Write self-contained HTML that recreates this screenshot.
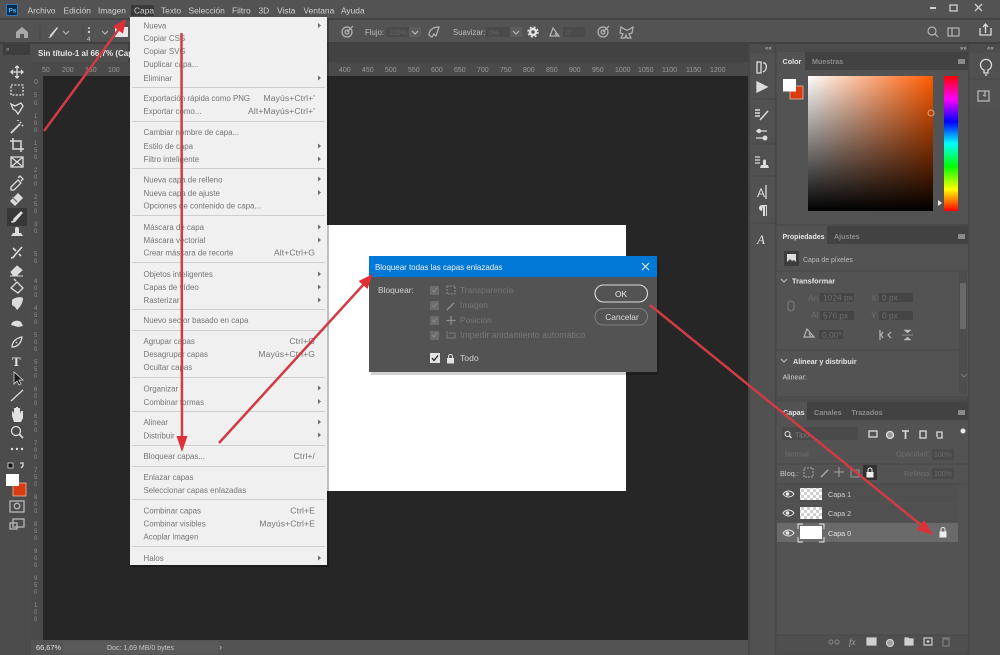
<!DOCTYPE html>
<html><head><meta charset="utf-8"><style>
html,body{margin:0;padding:0;background:#535353;width:1000px;height:655px;overflow:hidden}
svg{display:block}
text{font-family:"Liberation Sans",sans-serif;font-size:8.4px}
.mb text{fill:#d2d2d2;font-size:8.4px}
.m text{fill:#757575;font-size:7.9px}
.m text.r{text-anchor:end;font-size:8.6px;letter-spacing:.1px}
.w{fill:#e4e4e4}.g{fill:#8d8d8d}.d{fill:#6f6f6f}.b{font-weight:bold}
.ic{fill:none;stroke:#dcdcdc;stroke-width:1.3}
.ic2{fill:none;stroke:#b5b5b5;stroke-width:1.2}
.rl text{fill:#9a9a9a;font-size:7px}
.sp{stroke:#cfcfcf;stroke-width:1}
</style></head><body>
<svg width="1000" height="655" viewBox="0 0 1000 655" xmlns="http://www.w3.org/2000/svg">
<defs>
<linearGradient id="h1" x1="0" x2="1" y1="0" y2="0"><stop offset="0" stop-color="#fff"/><stop offset="1" stop-color="#ff5a00"/></linearGradient>
<linearGradient id="v1" x1="0" x2="0" y1="0" y2="1"><stop offset="0" stop-color="#000" stop-opacity="0"/><stop offset="1" stop-color="#000"/></linearGradient>
<linearGradient id="hue" x1="0" x2="0" y1="0" y2="1"><stop offset="0" stop-color="#f00"/><stop offset=".17" stop-color="#f0f"/><stop offset=".34" stop-color="#00f"/><stop offset=".5" stop-color="#0ff"/><stop offset=".67" stop-color="#0f0"/><stop offset=".84" stop-color="#ff0"/><stop offset="1" stop-color="#f00"/></linearGradient>
<pattern id="ck" width="6" height="6" patternUnits="userSpaceOnUse"><rect width="6" height="6" fill="#fff"/><rect width="3" height="3" fill="#cfcfcf"/><rect x="3" y="3" width="3" height="3" fill="#cfcfcf"/></pattern>
</defs>

<!-- base -->
<rect width="1000" height="655" fill="#535353"/>
<rect y="18" width="1000" height="2" fill="#434343"/>
<rect y="42" width="1000" height="2" fill="#404040"/>
<!-- tab bar -->
<rect x="31" y="44" width="717" height="18" fill="#424242"/>
<rect x="31" y="44" width="97" height="18" fill="#4e4e4e"/>
<text x="38" y="56" class="w b" style="font-size:8px">Sin título-1 al 66,7% (Capa</text>
<!-- left strip -->
<rect x="0" y="44" width="31" height="611" fill="#4c4c4c"/>
<rect x="3" y="44" width="27" height="11" fill="#3e3e3e"/>
<text x="6" y="51" style="font-size:6px" fill="#bbb">»</text>
<!-- rulers -->
<rect x="31" y="62" width="717" height="14" fill="#4a4a4a"/>
<rect x="31" y="62" width="12" height="578" fill="#4a4a4a"/>
<g class="rl">
<text x="42" y="72">50</text><text x="62" y="72">200</text><text x="85" y="72">150</text><text x="108" y="72">100</text>
<text x="339" y="72">400</text><text x="362" y="72">450</text><text x="385" y="72">500</text><text x="408" y="72">550</text><text x="431" y="72">600</text><text x="454" y="72">650</text><text x="477" y="72">700</text><text x="500" y="72">750</text><text x="523" y="72">800</text><text x="546" y="72">850</text><text x="569" y="72">900</text><text x="592" y="72">950</text><text x="615" y="72">1000</text><text x="638" y="72">1050</text><text x="662" y="72">1100</text><text x="686" y="72">1150</text><text x="710" y="72">1200</text>
</g>
<g fill="#8e8e8e" style="font-size:6.5px">
<text x="34" y="84" style="font-size:7px">0</text>
<text x="34" y="97" style="font-size:6px">5</text><text x="34" y="105" style="font-size:6px">0</text>
<text x="34" y="118" style="font-size:6px">1</text><text x="34" y="125" style="font-size:6px">0</text><text x="34" y="132" style="font-size:6px">0</text>
<text x="34" y="145" style="font-size:6px">1</text><text x="34" y="152" style="font-size:6px">5</text><text x="34" y="159" style="font-size:6px">0</text>
<text x="34" y="172" style="font-size:6px">2</text><text x="34" y="179" style="font-size:6px">0</text><text x="34" y="186" style="font-size:6px">0</text>
<text x="34" y="199" style="font-size:6px">2</text><text x="34" y="206" style="font-size:6px">5</text><text x="34" y="213" style="font-size:6px">0</text>
<text x="34" y="226" style="font-size:6px">3</text><text x="34" y="233" style="font-size:6px">0</text>
<text x="34" y="256" style="font-size:6px">5</text><text x="34" y="263" style="font-size:6px">0</text>
<text x="34" y="283" style="font-size:6px">4</text><text x="34" y="290" style="font-size:6px">0</text><text x="34" y="297" style="font-size:6px">0</text>
<text x="34" y="310" style="font-size:6px">4</text><text x="34" y="317" style="font-size:6px">5</text><text x="34" y="324" style="font-size:6px">0</text>
<text x="34" y="337" style="font-size:6px">5</text><text x="34" y="344" style="font-size:6px">0</text><text x="34" y="351" style="font-size:6px">0</text>
<text x="34" y="364" style="font-size:6px">5</text><text x="34" y="371" style="font-size:6px">5</text><text x="34" y="378" style="font-size:6px">0</text>
<text x="34" y="391" style="font-size:6px">6</text><text x="34" y="398" style="font-size:6px">0</text><text x="34" y="405" style="font-size:6px">0</text>
<text x="34" y="418" style="font-size:6px">6</text><text x="34" y="425" style="font-size:6px">5</text><text x="34" y="432" style="font-size:6px">0</text>
<text x="34" y="445" style="font-size:6px">7</text><text x="34" y="452" style="font-size:6px">0</text><text x="34" y="459" style="font-size:6px">0</text>
<text x="34" y="472" style="font-size:6px">7</text><text x="34" y="479" style="font-size:6px">5</text><text x="34" y="486" style="font-size:6px">0</text>
<text x="34" y="499" style="font-size:6px">8</text><text x="34" y="506" style="font-size:6px">0</text><text x="34" y="513" style="font-size:6px">0</text>
<text x="34" y="526" style="font-size:6px">8</text><text x="34" y="533" style="font-size:6px">5</text><text x="34" y="540" style="font-size:6px">0</text>
<text x="34" y="553" style="font-size:6px">9</text><text x="34" y="560" style="font-size:6px">0</text><text x="34" y="567" style="font-size:6px">0</text>
<text x="34" y="580" style="font-size:6px">9</text><text x="34" y="587" style="font-size:6px">5</text><text x="34" y="594" style="font-size:6px">0</text>
<text x="34" y="607" style="font-size:6px">1</text><text x="34" y="614" style="font-size:6px">0</text><text x="34" y="621" style="font-size:6px">0</text>
</g>
<!-- canvas -->
<rect x="43" y="76" width="705" height="564" fill="#262626"/>
<rect x="327" y="225" width="299" height="266" fill="#fff"/>
<!-- status -->
<rect x="31" y="640" width="717" height="15" fill="#535353"/>
<rect x="63" y="641" width="155" height="13" fill="#5a5a5a"/>
<text x="36" y="650" class="w" style="font-size:7.4px">66,67%</text>
<text x="107" y="650" fill="#c8c8c8" style="font-size:7px">Doc: 1,69 MB/0 bytes</text>
<text x="219" y="650" fill="#c8c8c8" style="font-size:9px">›</text>

<!-- menu bar -->
<rect x="6.500" y="4.500" width="11" height="11" rx="1" fill="#0b2a4a" stroke="#2f8fd6" stroke-width=".8"/>
<text x="8.500" y="12.500" fill="#5cb8f2" class="b" style="font-size:6.400px">Ps</text>
<g class="mb">
<rect x="131" y="5" width="23" height="11" fill="#3a3a3a"/>
<text x="27.500" y="13.500">Archivo</text><text x="63.500" y="13.500">Edición</text><text x="98" y="13.500">Imagen</text><text x="134" y="13.500">Capa</text><text x="161" y="13.500">Texto</text><text x="188.500" y="13.500">Selección</text><text x="232" y="13.500">Filtro</text><text x="258.500" y="13.500">3D</text><text x="277" y="13.500">Vista</text><text x="303.500" y="13.500">Ventana</text><text x="341" y="13.500">Ayuda</text>
</g>
<g class="ic" style="stroke:#cfcfcf">
<path d="M930 8h6" stroke-width="2"/><rect x="950" y="5" width="7" height="6"/><path d="M975 4l7 7M982 4l-7 7"/>
</g>

<!-- options bar -->
<path d="M16 32l6-5 6 5v6h-4v-4h-4v4h-4z" fill="#a8a8a8"/>
<path d="M40 25v16M83 25v16" stroke="#474747"/>
<path d="M47 38c2 0 3-1 3-3l7-8 1 1-6 8c-1 2-3 2-5 2z" fill="#d6d6d6"/>
<path d="M63 31l3 3 3-3M102 31l3 3 3-3" class="ic2" stroke-width="1"/>
<circle cx="89" cy="28" r="1" fill="#cfcfcf"/><circle cx="89" cy="32" r="1.200" fill="#cfcfcf"/>
<text x="87" y="41" fill="#cfcfcf" style="font-size:6px">4</text>
<rect x="115" y="27" width="13" height="10" fill="#e8e8e8"/>
<g transform="translate(347,32)" class="ic2"><circle r="5"/><circle r="2"/><path d="M0 0l6-6"/></g>
<text x="365" y="35" fill="#bdbdbd" style="font-size:7.800px">Flujo:</text>
<rect x="386" y="27" width="23" height="10" fill="#4a4a4a"/><text x="389" y="35" fill="#656565" style="font-size:7px">100%</text>
<rect x="409" y="27" width="12" height="10" fill="#5d5d5d"/><path d="M412 31l3 3 3-3" class="ic2" stroke-width="1"/>
<g transform="translate(434,32)" class="ic2"><path d="M-5 3c0-5 4-8 10-8l-3 9-2-2-2 3z"/></g>
<text x="453" y="35" fill="#bdbdbd" style="font-size:7.800px">Suavizar:</text>
<rect x="486" y="27" width="24" height="10" fill="#4a4a4a"/><text x="489" y="35" fill="#656565" style="font-size:7px">0%</text>
<rect x="510" y="27" width="12" height="10" fill="#5d5d5d"/><path d="M513 31l3 3 3-3" class="ic2" stroke-width="1"/>
<g transform="translate(533,32)"><circle r="3" fill="none" stroke="#e4e4e4" stroke-width="2.400"/><circle r="5" fill="none" stroke="#e4e4e4" stroke-width="1.400" stroke-dasharray="2 2"/></g>
<path d="M550 36h9l-6-8zM555 33l2 3" class="ic2"/>
<rect x="563" y="27" width="22" height="10" fill="#4a4a4a"/><text x="566" y="35" fill="#656565" style="font-size:7px">0°</text>
<g transform="translate(603,32)" class="ic2" stroke-width="1.300"><circle r="5"/><circle r="2"/><path d="M0 0l6-6"/></g>
<path d="M621 27l5 3 2 0 5-3-1 6-3 1 2 4-4 0-1-3-1 3-4 0 2-4-3-1z" class="ic2"/>
<g class="ic2"><circle cx="932" cy="31" r="4"/><path d="M935 34l3 3"/><rect x="948" y="28" width="11" height="8"/><path d="M952 28v8"/></g>
<path d="M980 28v7h11v-7M985.500 33v-8M983 27l2.500-3 2.500 3" class="ic" stroke-width="1.400"/>

<!-- toolbar -->
<rect x="7" y="208" width="20" height="18" fill="#373737"/>
<g class="ic">
<path d="M17 66v12M11 72h12M15 68l2-2 2 2M15 76l2 2 2-2M13 70l-2 2 2 2M21 70l2 2-2 2" />
<rect x="11" y="85" width="12" height="10" stroke-dasharray="2 1.400"/>
<path d="M11 104l4 2 6-3 2 3-3 5-2 3-2-3-3-2z"/>
<path d="M11 133l9-9M20 122l1 1M22 125l1 1M18 120v1" stroke-width="1.800"/>
<path d="M13 138v11h11M10 141h11v11" stroke-width="1.500"/>
<rect x="11" y="157" width="12" height="10"/><path d="M11 157l12 10M23 157l-12 10"/>
<path d="M11 187l7-7 3 3-7 7h-3zM18 178l2-2 3 3-2 2" />
<path d="M10 201l8-8 5 5-8 8z" fill="#dcdcdc" stroke="none"/><path d="M12 197l5 5" stroke="#777"/>
<path d="M11 222c2 0 3-1 3-3l7-7 1 1-6 7c-1 2-3 2-5 2z" fill="#e8e8e8"/>
<path d="M12 239h10M11 236h12l-2-3h-2v-4a2 2 0 1 0-4 0v4h-2z" fill="#dcdcdc" stroke="none"/>
<path d="M11 258c2 0 3-1 4-3l7-8M13 248l3 3M19 254l2 2" stroke-width="1.600"/>
<path d="M11 272l6-6 5 4-5 5h-4zM10 276h13" fill="#dcdcdc" stroke-width="1"/>
<path d="M11 288l6-6 6 6-5 5zM16 281l-2-2"/>
<path d="M12 300c2-2 8-4 11-2 0 5-3 9-6 12l-2-3-3-2z" fill="#dcdcdc" stroke="none"/>
<path d="M11 325a6 5 0 0 1 10-3l2 4-5 1z" fill="#dcdcdc" stroke="none"/>
<path d="M12 347c0-5 4-9 10-10-1 6-4 10-10 10zM17 342l-1 1"/>
<path d="M11 401l12-11"/>
<path d="M12 416v-4l1-1 1 3v-6h2v5-6h2v6-5h2v6l1-3h2v7l-2 4h-7z" fill="#e2e2e2" stroke="none"/>
<circle cx="16" cy="431" r="4.500"/><path d="M19 434l4 4" stroke-width="1.700"/>
<rect x="10" y="501" width="14" height="11" stroke="#b8b8b8"/><circle cx="17" cy="506" r="2.800" stroke="#b8b8b8"/>
<rect x="13" y="519" width="11" height="8" stroke="#b8b8b8"/><rect x="10" y="523" width="7" height="6" stroke="#b8b8b8"/>
<path d="M20 463l3 0v3M23 466l-2 2"/>
</g>
<text x="12" y="366" fill="#e6e6e6" class="b" style="font-family:'Liberation Serif',serif;font-size:13px">T</text>
<path d="M14 372v12l3-3 2 4 2-1-2-4h4z" fill="#1c1c1c" stroke="#d8d8d8" stroke-width=".8"/>
<circle cx="12" cy="449" r="1.200" fill="#ddd"/><circle cx="17" cy="449" r="1.200" fill="#ddd"/><circle cx="22" cy="449" r="1.200" fill="#ddd"/>
<rect x="8" y="463" width="5" height="5" fill="#111" stroke="#ddd" stroke-width=".8"/>
<rect x="13" y="483" width="13" height="13" fill="#da3c12" stroke="#e7b7a0" stroke-width=".8"/>
<rect x="6" y="474" width="13" height="12" fill="#fff"/>

<!-- right collapsed dock -->
<rect x="748" y="44" width="252" height="611" fill="#4c4c4c"/>
<path d="M749 44v611M775 44v611M968 44v611" stroke="#424242"/>
<rect x="750" y="53" width="25" height="45" fill="#515151"/>
<rect x="750" y="100" width="25" height="42" fill="#515151"/>
<rect x="750" y="145" width="25" height="30" fill="#515151"/>
<rect x="750" y="177" width="25" height="45" fill="#515151"/>
<rect x="750" y="224" width="25" height="431" fill="#515151"/>
<rect x="970" y="53" width="30" height="25" fill="#515151"/><rect x="970" y="80" width="30" height="28" fill="#515151"/><rect x="970" y="108" width="30" height="547" fill="#4f4f4f"/>
<text x="765" y="50" fill="#c8c8c8" style="font-size:6px">««</text><text x="960" y="50" fill="#c8c8c8" style="font-size:6px">»»</text><text x="987" y="50" fill="#c8c8c8" style="font-size:6px">««</text>
<g class="ic">
<rect x="757" y="62" width="4" height="11"/><path d="M763 63c4-1 5 7 0 9"/>
<path d="M757 82l10 5-10 5z" fill="#dcdcdc"/>
<path d="M755 110h5M755 113h5M755 116h5M760 120l8-9" stroke-width="1.500"/>
<path d="M756 131h11M756 138h11"/>
<circle cx="759" cy="131" r="1.500" fill="#ddd"/><circle cx="765" cy="138" r="1.800" fill="#ddd"/>
<path d="M755 157h5M755 160h5M755 163h5"/><path d="M760 168h9l-1-3h-2v-4a1.500 1.500 0 1 0-3 0v4h-2z" fill="#dcdcdc" stroke="none"/>
<path d="M766 185v14"/>
</g>
<text x="757" y="197" fill="#ddd" style="font-size:12px">A</text>
<path d="M763 206v10h2v-10h1v10h1v-11h-5a3 3 0 0 0 0 6z" fill="#ddd"/>
<text x="757" y="244" fill="#ddd" style="font-family:'Liberation Serif',serif;font-style:italic;font-size:13px">A</text>
<g class="ic"><path d="M984 70a5.500 5.500 0 1 1 4 0v3h-4zM985 75h2"/><rect x="978" y="91" width="11" height="10" stroke="#b5b5b5"/><path d="M985 91v5l-2-1" stroke="#b5b5b5"/></g>

<!-- color panel -->
<rect x="777" y="52" width="191" height="172" fill="#535353"/>
<rect x="777" y="52" width="191" height="18" fill="#424242"/>
<rect x="777" y="52" width="28" height="18" fill="#535353"/>
<text x="782.500" y="64" class="w b" style="font-size:7.200px">Color</text>
<text x="812" y="64" class="g b" style="font-size:7.100px">Muestras</text>
<rect x="958" y="59" width="7" height="5" fill="#8a8a8a"/>
<rect x="790" y="86" width="13" height="13" fill="#da3c12" stroke="#e7b7a0" stroke-width=".8"/>
<rect x="783" y="79" width="13" height="12.500" fill="#fff"/>
<rect x="808" y="76" width="125" height="135" fill="url(#h1)"/>
<rect x="808" y="76" width="125" height="135" fill="url(#v1)"/>
<rect x="944" y="76" width="14" height="135" fill="url(#hue)"/>
<circle cx="931" cy="113" r="3" fill="none" stroke="#e8a070"/>
<path d="M938 200l4 3-4 3z" fill="#eee"/>

<!-- properties panel -->
<rect x="777" y="226" width="191" height="170" fill="#535353"/>
<rect x="777" y="226" width="191" height="18" fill="#424242"/>
<rect x="777" y="226" width="50" height="18" fill="#535353"/>
<text x="782.500" y="239" class="w b" style="font-size:7px">Propiedades</text>
<text x="834" y="239" class="g b" style="font-size:7.100px">Ajustes</text>
<rect x="958" y="234" width="7" height="5" fill="#8a8a8a"/>
<rect x="784" y="251" width="15" height="15" fill="#3d3d3d"/>
<path d="M787 254h9v8h-9z" fill="#ddd"/><path d="M787 262l3-3 2 2 2-1 2 2z" fill="#444"/>
<text x="803" y="262" fill="#b8b8b8" style="font-size:6.900px">Capa de píxeles</text>
<path d="M777 271h191" stroke="#474747"/>
<path d="M781 279l3 3 3-3M781 359l3 3 3-3" class="ic2"/>
<text x="792" y="283.500" class="w b" style="font-size:7.400px">Transformar</text>
<g fill="#6d6d6d" style="font-size:7px"><text x="808" y="301">An</text><text x="811" y="318">Al</text><text x="871" y="301">X</text><text x="871" y="318">Y</text></g>
<rect x="820" y="293" width="34" height="9" fill="#454545"/><rect x="820" y="311" width="34" height="9" fill="#454545"/>
<rect x="879" y="293" width="34" height="9" fill="#454545"/><rect x="879" y="311" width="34" height="9" fill="#454545"/>
<rect x="819" y="330" width="24" height="9" fill="#454545"/>
<g fill="#6f6f6f" style="font-size:7px"><text x="823" y="300.500">1024 px</text><text x="823" y="318.500">576 px</text><text x="882" y="300.500">0 px</text><text x="882" y="318.500">0 px</text><text x="822" y="338">0,00°</text></g>
<rect x="788" y="301" width="6" height="10" rx="3" fill="none" stroke="#7e7e7e"/>
<path d="M804 337h10l-7-8zM809 333l2 4" class="ic2" stroke="#bbb"/>
<path d="M880 330v10M883 332l-2 3 2 3M891 332l-3 3 3 3" class="ic2" stroke="#8a8a8a"/>
<path d="M902 335h11M904 330h7l-3.500 3zM904 340h7l-3.500-3z" fill="#bdbdbd" stroke="#bdbdbd" stroke-width=".5"/>
<rect x="959" y="272" width="8" height="122" fill="#4d4d4d"/><rect x="960" y="283" width="6" height="46" fill="#6a6a6a"/>
<path d="M777 350h182" stroke="#474747"/>
<text x="793" y="364" class="w b" style="font-size:7.200px">Alinear y distribuir</text>
<text x="782.500" y="379.500" fill="#cfcfcf" style="font-size:7.200px">Alinear:</text>
<path d="M961 374l3 3 3-3" stroke="#7a7a7a" fill="none"/>

<!-- layers panel -->
<rect x="777" y="402" width="191" height="244" fill="#535353"/>
<rect x="777" y="402" width="191" height="18" fill="#424242"/>
<rect x="777" y="402" width="30" height="18" fill="#535353"/>
<text x="783" y="415" class="w b" style="font-size:7.200px">Capas</text>
<text x="814" y="415" class="g b" style="font-size:7.200px">Canales</text>
<text x="851.500" y="415" class="g b" style="font-size:7.200px">Trazados</text>
<rect x="958" y="410" width="7" height="5" fill="#8a8a8a"/>
<rect x="782" y="427" width="76" height="13" fill="#4a4a4a"/>
<circle cx="787.500" cy="434" r="2.500" fill="none" stroke="#e2e2e2"/><path d="M789.500 436l2 2" stroke="#e2e2e2" stroke-width="1.400"/>
<text x="795" y="437.500" fill="#7a7a7a" style="font-size:7.400px">Tipo</text>
<g class="ic" stroke-width="1.100">
<rect x="869" y="431" width="8" height="6"/>
<circle cx="890" cy="435" r="3.500" fill="#9a9a9a"/>
<path d="M902 431h7M905.500 431v8" stroke-width="1.600"/>
<rect x="920" y="431" width="6" height="7"/>
<path d="M937 437v-5h5v6h-5"/>
</g>
<circle cx="963" cy="431" r="2.500" fill="#e8e8e8"/>
<text x="785" y="456.500" fill="#6f6f6f" style="font-size:7.400px">Normal</text>
<text x="896" y="456.500" fill="#6f6f6f" style="font-size:7.400px">Opacidad:</text>
<rect x="932" y="449" width="22" height="11" fill="#4a4a4a"/><text x="934" y="457" fill="#6a6a6a" style="font-size:7px">100%</text>
<path d="M777 464h191M777 484h191" stroke="#474747"/>
<text x="780" y="476" fill="#c8c8c8" style="font-size:7.400px">Bloq.:</text>
<rect x="804" y="468" width="9" height="9" fill="none" stroke="#a6a6a6" stroke-dasharray="2 1"/>
<path d="M821 477l7-7" stroke="#a6a6a6" stroke-width="1.500"/>
<path d="M839 467v10M834 472h10" stroke="#a6a6a6"/>
<rect x="851" y="470" width="8" height="7" fill="none" stroke="#a6a6a6" stroke-width=".8"/>
<rect x="863" y="465" width="14" height="15" fill="#333"/>
<rect x="866.500" y="472" width="7" height="5.500" fill="#eee"/><path d="M868 472v-2a2 2 0 0 1 4 0v2" fill="none" stroke="#eee"/>
<text x="904" y="476" fill="#6f6f6f" style="font-size:7.400px">Relleno:</text>
<rect x="932" y="468" width="22" height="11" fill="#4a4a4a"/><text x="934" y="476" fill="#6a6a6a" style="font-size:7px">100%</text>
<!-- layers -->
<rect x="777" y="485" width="181" height="18" fill="#505050"/>
<rect x="777" y="504" width="181" height="18" fill="#505050"/>
<rect x="777" y="523" width="181" height="19" fill="#6a6a6a"/>
<g>
<path d="M783 494c3-4 8-4 11 0-3 4-8 4-11 0z" fill="none" stroke="#e8e8e8"/><circle cx="787.500" cy="494" r="1.800" fill="#e8e8e8"/>
<path d="M783 513c3-4 8-4 11 0-3 4-8 4-11 0z" fill="none" stroke="#e8e8e8"/><circle cx="787.500" cy="513" r="1.800" fill="#e8e8e8"/>
<path d="M783 533c3-4 8-4 11 0-3 4-8 4-11 0z" fill="none" stroke="#e8e8e8"/><circle cx="787.500" cy="533" r="1.800" fill="#e8e8e8"/>
</g>
<rect x="800" y="488" width="22" height="12" fill="url(#ck)"/>
<rect x="800" y="507" width="22" height="12" fill="url(#ck)"/>
<rect x="800" y="526" width="22" height="13" fill="#fff"/>
<path d="M798 529v-5h5M819 524h5v5M824 537v5h-5M803 542h-5v-5" fill="none" stroke="#eee" stroke-width=".9"/>
<text x="828" y="497" fill="#d0d0d0" style="font-size:7.200px">Capa 1</text>
<text x="828" y="516" fill="#d0d0d0" style="font-size:7.200px">Capa 2</text>
<text x="828" y="536" fill="#e0e0e0" style="font-size:7.200px">Capa 0</text>
<rect x="939.500" y="531.500" width="7" height="6" fill="#eee"/><path d="M941 531.500v-2a2 2 0 0 1 4 0v2" fill="none" stroke="#eee"/>
<!-- layer bottom -->
<rect x="777" y="635" width="191" height="16" fill="#4f4f4f"/>
<path d="M777 635h191" stroke="#474747"/>
<g class="ic2">
<rect x="829" y="640" width="4" height="4" rx="2" stroke="#7c7c7c"/><rect x="835" y="640" width="4" height="4" rx="2" stroke="#7c7c7c"/>
<rect x="867" y="638" width="9" height="7" stroke="#cfcfcf" fill="#cfcfcf"/>
<circle cx="890" cy="643" r="3.500" stroke="#cfcfcf" fill="#9f9f9f"/>
<path d="M905 638h3l1 1h4v6h-8z" stroke="#cfcfcf" fill="#cfcfcf"/>
<rect x="924" y="638" width="8" height="7" stroke="#cfcfcf"/><path d="M928 640v3M926.500 641.500h3" stroke="#cfcfcf"/>
<path d="M943 639h6v7h-6zM942 638h8" stroke="#7c7c7c"/>
</g>
<text x="849" y="645" fill="#a6a6a6" style="font-family:'Liberation Serif',serif;font-style:italic;font-size:9px">fx</text>

<!-- dropdown menu -->
<rect x="132" y="19" width="197" height="548" fill="#000" opacity=".25"/>
<rect x="130" y="17" width="197" height="548" fill="#f0f0f0"/>
<g class="m">
<text x="143.500" y="28.500">Nueva</text>
<text x="143.500" y="41">Copiar CSS</text>
<text x="143.500" y="54">Copiar SVG</text>
<text x="143.500" y="67">Duplicar capa...</text>
<text x="143.500" y="81">Eliminar</text>
<text x="143.500" y="101">Exportación rápida como PNG</text><text class="r" x="315" y="101">Mayús+Ctrl+'</text>
<text x="143.500" y="114">Exportar como...</text><text class="r" x="315" y="114">Alt+Mayús+Ctrl+'</text>
<text x="143.500" y="135">Cambiar nombre de capa...</text>
<text x="143.500" y="149">Estilo de capa</text>
<text x="143.500" y="162">Filtro inteligente</text>
<text x="143.500" y="182.500">Nueva capa de relleno</text>
<text x="143.500" y="196">Nueva capa de ajuste</text>
<text x="143.500" y="208.500">Opciones de contenido de capa...</text>
<text x="143.500" y="230">Máscara de capa</text>
<text x="143.500" y="243">Máscara vectorial</text>
<text x="143.500" y="255.500">Crear máscara de recorte</text><text class="r" x="315" y="255.500">Alt+Ctrl+G</text>
<text x="143.500" y="277">Objetos inteligentes</text>
<text x="143.500" y="290">Capas de vídeo</text>
<text x="143.500" y="303">Rasterizar</text>
<text x="143.500" y="323">Nuevo sector basado en capa</text>
<text x="143.500" y="344">Agrupar capas</text><text class="r" x="315" y="344">Ctrl+G</text>
<text x="143.500" y="357">Desagrupar capas</text><text class="r" x="315" y="357">Mayús+Ctrl+G</text>
<text x="143.500" y="370">Ocultar capas</text>
<text x="143.500" y="391.500">Organizar</text>
<text x="143.500" y="405">Combinar formas</text>
<text x="143.500" y="425">Alinear</text>
<text x="143.500" y="438.500">Distribuir</text>
<text x="143.500" y="459">Bloquear capas...</text><text class="r" x="315" y="459">Ctrl+/</text>
<text x="143.500" y="480">Enlazar capas</text>
<text x="143.500" y="493">Seleccionar capas enlazadas</text>
<text x="143.500" y="513.500">Combinar capas</text><text class="r" x="315" y="513.500">Ctrl+E</text>
<text x="143.500" y="526.500">Combinar visibles</text><text class="r" x="315" y="526.500">Mayús+Ctrl+E</text>
<text x="143.500" y="539.500">Acoplar imagen</text>
<text x="143.500" y="561">Halos</text>
</g>
<path class="sp" d="M132 87.500h193M132 121.500h193M132 168.500h193M132 215.500h193M132 262.500h193M132 309.500h193M132 330.500h193M132 377.500h193M132 411.500h193M132 445.500h193M132 466.500h193M132 499.500h193M132 546.500h193"/>
<path fill="#6e6e6e" d="M318 23l3 2.500-3 2.500zM318 75.500l3 2.500-3 2.500zM318 143.500l3 2.500-3 2.500zM318 156.500l3 2.500-3 2.500zM318 176.500l3 2.500-3 2.500zM318 190l3 2.500-3 2.500zM318 224.500l3 2.500-3 2.500zM318 237.500l3 2.500-3 2.500zM318 271.500l3 2.500-3 2.500zM318 284.500l3 2.500-3 2.500zM318 297.500l3 2.500-3 2.500zM318 385.500l3 2.500-3 2.500zM318 399l3 2.500-3 2.500zM318 419.500l3 2.500-3 2.500zM318 432.500l3 2.500-3 2.500zM318 555.500l3 2.500-3 2.500z"/>

<!-- dialog -->
<rect x="371" y="259" width="288" height="116" fill="#000" opacity=".18"/>
<rect x="369" y="256" width="288" height="116" fill="#535353"/>
<rect x="369" y="256" width="288" height="21" fill="#0078d7"/>
<text x="375" y="270" fill="#f2f2f2" style="font-size:7.950px">Bloquear todas las capas enlazadas</text>
<path d="M642 263l7 7M649 263l-7 7" stroke="#e8f2fb" stroke-width="1.100"/>
<text x="378" y="293" fill="#d2d2d2" style="font-size:8.400px">Bloquear:</text>
<g fill="#6c6c6c"><rect x="430" y="286" width="9" height="9"/><rect x="430" y="301" width="9" height="9"/><rect x="430" y="316" width="9" height="9"/><rect x="430" y="331" width="9" height="9"/></g>
<path d="M432 290l2 2 3-4M432 305l2 2 3-4M432 320l2 2 3-4M432 335l2 2 3-4" fill="none" stroke="#8a8a8a"/>
<rect x="447" y="286" width="8" height="8" fill="none" stroke="#8e8e8e" stroke-dasharray="2 1"/>
<path d="M447 310l7-7" stroke="#8e8e8e" stroke-width="1.400"/>
<path d="M451 316v9M446.500 320.500h9" stroke="#8e8e8e" stroke-width="1.200"/>
<path d="M447 331v7h9M449 333h6v4" fill="none" stroke="#7e7e7e"/>
<g fill="#777" style="font-size:8.600px"><text x="460" y="293">Transparencia</text><text x="460" y="308">Imagen</text><text x="460" y="323">Posición</text><text x="460" y="338" style="font-size:8.800px">Impedir anidamiento automático</text></g>
<rect x="430" y="353" width="10" height="10" fill="#e2e2e2"/>
<path d="M432 358l2 2.500 4-5" fill="none" stroke="#222" stroke-width="1.300"/>
<rect x="447" y="358" width="7" height="5.500" fill="#e2e2e2"/><path d="M448.500 358v-1.500a2 2 0 0 1 4 0v1.500" fill="none" stroke="#e2e2e2"/>
<text x="460" y="361" fill="#d2d2d2" style="font-size:8.600px">Todo</text>
<rect x="595" y="285" width="52.500" height="17" rx="8.500" fill="#535353" stroke="#dcdcdc" stroke-width="1.100"/>
<text x="621" y="297" text-anchor="middle" fill="#e8e8e8" style="font-size:8.400px">OK</text>
<rect x="595" y="308.500" width="52.500" height="16.500" rx="8.200" fill="#535353" stroke="#808080"/>
<text x="622" y="320" text-anchor="middle" fill="#dcdcdc" style="font-size:8.400px">Cancelar</text>

<!-- red arrows -->
<g stroke="#d13b44" stroke-width="2.500" fill="none">
<path d="M44 131L119 29"/>
<path d="M181.500 33L182 440"/>
<path d="M219 443L364 284"/>
<path d="M650 305L921 525"/>
</g>
<g fill="#df2f37">
<path d="M126 19L123 33.600 113 26.500z"/>
<path d="M182 452L176.500 436 187.500 436z"/>
<path d="M373 274L367.400 289 358.600 281z"/>
<path d="M933 535L924.400 520.300 916.800 529.700z"/>
</g>
</svg>
</body></html>
